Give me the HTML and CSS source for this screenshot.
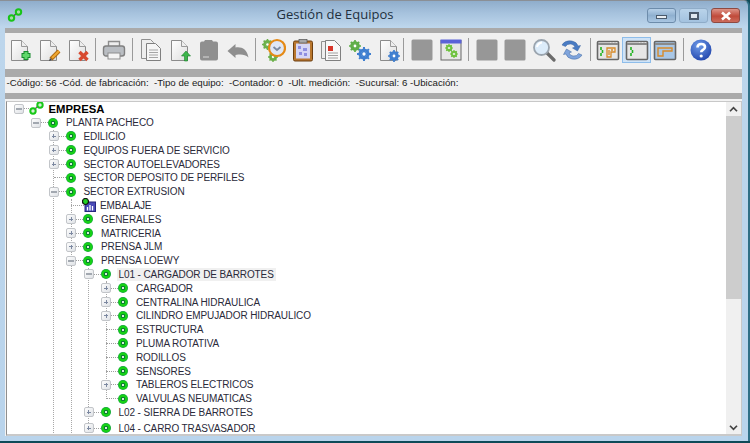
FILE: index.html
```html
<!DOCTYPE html>
<html lang="es">
<head>
<meta charset="utf-8">
<title>Gestión de Equipos</title>
<link rel="stylesheet" href="styles.css">
</head>
<body>
<svg class="defs" aria-hidden="true">
  <defs>
    <linearGradient id="page" x1="0" y1="0" x2="1" y2="1"><stop offset="0" stop-color="#fff"/><stop offset="1" stop-color="#dedede"/></linearGradient>
    <radialGradient id="helpg" cx=".4" cy=".3" r=".8"><stop offset="0" stop-color="#6f9be8"/><stop offset="1" stop-color="#1c3fa8"/></radialGradient>
    <symbol id="doc" viewBox="0 0 24 24"><path d="M3.5 2.5h10l6 6v14h-16z" fill="url(#page)" stroke="#8b8b8b"/><path d="M13.5 2.5v6h6" fill="#eee" stroke="#9a9a9a"/></symbol>
    <symbol id="gear" viewBox="0 0 12 12"><circle cx="6" cy="6" r="3.6" fill="none" stroke="currentColor" stroke-width="2.4"/><path d="M6 0v12M0 6h12M1.8 1.8l8.4 8.4M10.2 1.8l-8.4 8.4" stroke="currentColor" stroke-width="1.7"/><circle cx="6" cy="6" r="1.4" fill="#fff"/></symbol>
    <symbol id="win" viewBox="0 0 24 24"><rect x="1.5" y="3.5" width="21" height="18" rx="1" fill="#e6e6e6" stroke="#666" stroke-width="1.6"/><path d="M2 6h20" stroke="#8a8a8a" stroke-width="2"/><path d="M14 4.5h1M17 4.5h1M20 4.5h1" stroke="#ddd"/></symbol>
    <symbol id="grayblock" viewBox="0 0 24 24"><rect x="1.5" y="1.5" width="21" height="21" rx="1.5" fill="#979797"/></symbol>
  </defs>
</svg>
<div class="window">
  <header class="titlebar">
    <svg class="app-icon" viewBox="0 0 16 14"><path d="M5 9.500 11 4" stroke="#555" stroke-width="1.500"/><circle cx="4.500" cy="10" r="2.700" fill="#a9d8a9" stroke="#18c418" stroke-width="2"/><circle cx="11.500" cy="4" r="2.700" fill="#a9d8a9" stroke="#18c418" stroke-width="2"/></svg>
    <h1 class="title">Gestión de Equipos</h1>
    <div class="controls">
      <span class="ctl"><i class="ctl-min"></i></span>
      <span class="ctl ctl-plain"><i class="ctl-max"></i></span>
      <span class="ctl ctl-close">
        <svg viewBox="0 0 12 10"><path d="M2 1.500 10 8.500M10 1.500 2 8.500" stroke="#fff" stroke-width="2.600"/></svg>
      </span>
    </div>
  </header>

  <main class="client">
    <div class="bar"></div>
    <div class="toolbar">
      <div class="tb-group">
        <span class="btn"><svg viewBox="0 0 24 24"><use href="#doc"/><path d="M18 13v9M13.500 17.500h9" stroke="#178a2c" stroke-width="5"/><path d="M18 14v7M14.500 17.500h7" stroke="#5fd86a" stroke-width="3"/></svg></span>
        <span class="btn"><svg viewBox="0 0 24 24"><use href="#doc"/><path d="M22 13 14 21" stroke="#b06a10" stroke-width="4"/><path d="M22 13 15 20" stroke="#f0a830" stroke-width="2.200"/><path d="M13 20l-1 3 3-1z" fill="#444"/></svg></span>
        <span class="btn"><svg viewBox="0 0 24 24"><use href="#doc"/><path d="M13.500 14l8 8M21.500 14l-8 8" stroke="#d84a30" stroke-width="3.400"/></svg></span>
      </div>
      <span class="sep"></span>
      <div class="tb-group">
        <span class="btn"><svg viewBox="0 0 24 24"><path d="M6.500 8V3.500h11V8" fill="#eee" stroke="#8d8d8d" stroke-width="1.400"/><rect x="1.500" y="8" width="21" height="10" rx="2.500" fill="#b9bdc2" stroke="#808080" stroke-width="1.400"/><rect x="6" y="15" width="12" height="6" fill="#f4f4f4" stroke="#8d8d8d"/></svg></span>
      </div>
      <span class="sep"></span>
      <div class="tb-group">
        <span class="btn"><svg viewBox="0 0 24 24"><path d="M2.500 1.500h9l3 3v16h-12z" fill="#eee" stroke="#909090"/><path d="M7.500 5.500h9l5 5v12h-14z" fill="#f6f6f6" stroke="#808080"/><path d="M10 12h9M10 14.500h9M10 17h9M10 19.500h9" stroke="#a5a5a5" stroke-width="1.200"/></svg></span>
        <span class="btn"><svg viewBox="0 0 24 24"><use href="#doc"/><path d="M18 13l4.500 5h-3v5h-3v-5h-3z" fill="#3cb54a" stroke="#1c7f2c" stroke-width=".6"/></svg></span>
        <span class="btn"><svg viewBox="0 0 24 24"><path d="M3 5.500q0-2 2-2h2l1-1.500h7l1 1.500h3q2 0 2 2v15q0 2-2 2h-14q-2 0-2-2z" fill="#8f8f8f"/><path d="M6 19h6" stroke="#c5c5c5" stroke-width="1.400"/></svg></span>
        <span class="btn"><svg viewBox="0 0 24 24"><path d="M1.500 13l8-7v3.500c6-1 11.500 1.500 13 10-3.500-3-7-3.500-13-2.500v3z" fill="#8f8f8f"/></svg></span>
      </div>
      <span class="sep"></span>
      <div class="tb-group tb-fine">
        <span class="btn"><svg viewBox="0 0 24 24"><use href="#gear" x="0" y="1" width="11" height="11" color="#6bb04a"/><use href="#gear" x="6" y="14" width="10" height="10" color="#6bb04a"/><circle cx="15" cy="10" r="8" fill="#dfe7f5" stroke="#e58a16" stroke-width="2.200"/><path d="M11.500 9l3.500 3 3.500-3" fill="none" stroke="#7c8aa0" stroke-width="1.800"/></svg></span>
        <span class="btn"><svg viewBox="0 0 24 24"><rect x="2.500" y="3" width="19" height="20" rx="1.500" fill="#b9772e" stroke="#6d3f10"/><rect x="5" y="5.500" width="14" height="15" fill="#d6d6f5"/><path d="M7 8h3v3h-3zM12 10h4v3h-4zM8 14h3v3h-3zM13 15h3v3h-3z" fill="#8f8fe0"/><rect x="8" y="1.500" width="8" height="3.500" fill="#a8a8a8" stroke="#555" stroke-width=".7"/></svg></span>
        <span class="btn"><svg viewBox="0 0 24 24"><path d="M2.500 3.500h9l3 3v14h-12z" fill="#eee" stroke="#909090"/><path d="M6.500 2.500h9l6 6v14h-15z" fill="#f8f8f8" stroke="#808080"/><rect x="9" y="8" width="5" height="5" fill="#d8352a"/><path d="M9 15h10M9 17.500h10M9 20h10" stroke="#a0a0a0" stroke-width="1.100"/></svg></span>
        <span class="btn"><svg viewBox="0 0 24 24"><use href="#gear" x="1" y="2" width="12" height="12" color="#5fae48"/><use href="#gear" x="9" y="9" width="14" height="14" color="#3f7fd0"/></svg></span>
        <span class="btn"><svg viewBox="0 0 24 24"><use href="#doc"/><use href="#gear" x="11" y="12" width="12" height="12" color="#3f7fd0"/></svg></span>
      </div>
      <span class="sep sep-narrow"></span>
      <div class="tb-group tb-tight">
        <span class="btn"><svg viewBox="0 0 24 24"><use href="#grayblock"/></svg></span>
        <span class="btn"><svg viewBox="0 0 24 24"><rect x="2" y="2.500" width="20" height="19.500" fill="#e6e6e6" stroke="#666"/><rect x="1.500" y="1.500" width="21" height="4" fill="#5a62d8"/><use href="#gear" x="6" y="6" width="8" height="8" color="#6ec23e"/><use href="#gear" x="11" y="12" width="8" height="8" color="#6ec23e"/></svg></span>
      </div>
      <span class="sep"></span>
      <div class="tb-group tb-tight">
        <span class="btn"><svg viewBox="0 0 24 24"><use href="#grayblock"/></svg></span>
        <span class="btn"><svg viewBox="0 0 24 24"><use href="#grayblock"/></svg></span>
        <span class="btn"><svg viewBox="0 0 24 24"><path d="M14.500 14.500 22 22" stroke="#6b6b6b" stroke-width="3.200" stroke-linecap="round"/><circle cx="9.500" cy="9.500" r="7.500" fill="#dcecfa" stroke="#9aa4ae" stroke-width="1.800"/><path d="M5 9q1-4 5-4.500" stroke="#fff" stroke-width="2" fill="none"/></svg></span>
        <span class="btn"><svg viewBox="0 0 24 24"><path d="M2 7q3-5 10-4 5 1 6 5l2.500-.5-3 5.500-5-3 2.500-1q-1-2.500-4-3-4-.5-5.500 2.500z" fill="#4a7cc4" stroke="#3a649f" stroke-width=".5"/><path d="M22 17q-3 5-10 4-5-1-6-5l-2.500.5 3-5.500 5 3-2.500 1q1 2.500 4 3 4 .5 5.500-2.500z" fill="#7fa4dc" stroke="#3a649f" stroke-width=".5"/></svg></span>
      </div>
      <span class="sep"></span>
      <div class="tb-group tb-tight">
        <span class="btn"><svg viewBox="0 0 24 24"><use href="#win"/><path d="M5 9v3M6.500 12v3M5 15v3" stroke="#22b522" stroke-width="1.600"/><path d="M11 10h8v4h-4v5h-4zM13 12v5M15 12h2" fill="none" stroke="#d88a28" stroke-width="1.300"/></svg></span>
        <span class="btn btn-on"><svg viewBox="0 0 24 24"><use href="#win"/><path d="M6 9v3M7.500 12v3M6 15v3" stroke="#22b522" stroke-width="1.600"/></svg></span>
        <span class="btn"><svg viewBox="0 0 24 24"><rect x="1.500" y="3.500" width="21" height="18" rx="1" fill="#a9c7e6" stroke="#666" stroke-width="1.600"/><path d="M2 6h20" stroke="#8a8a8a" stroke-width="2"/><path d="M5 10h14v3h-9v5h-5z" fill="none" stroke="#d88a28" stroke-width="1.400"/></svg></span>
      </div>
      <span class="sep"></span>
      <span class="btn"><svg viewBox="0 0 24 24"><circle cx="12" cy="12" r="10.500" fill="url(#helpg)"/><path d="M8.500 9.500q0-3.500 3.700-3.500 3.800 0 3.800 3 0 2-2.200 3-1.600.8-1.600 2.200" fill="none" stroke="#fff" stroke-width="2.600"/><circle cx="12.200" cy="18" r="1.600" fill="#fff"/></svg></span>
    </div>
    <div class="bar bar-mid"></div>
    <div class="info">-Código: 56 -Cód. de fabricación:  -Tipo de equipo:  -Contador: 0  -Ult. medición:  -Sucursal: 6 -Ubicación:</div>
    <div class="bar bar-low"></div>

    <section class="panel">
      <div class="tree">
        <div class="row row-root"><span class="tg minus"></span><span class="dash dash-root"></span><svg class="root-icon" viewBox="0 0 15 14"><path d="M5 9 10 4" stroke="#666" stroke-width="1.500"/><circle cx="4" cy="10" r="2.700" fill="#d6f0d6" stroke="#16c816" stroke-width="2"/><circle cx="11" cy="4" r="2.700" fill="#d6f0d6" stroke="#16c816" stroke-width="2"/></svg><b class="label">EMPRESA</b></div>
        <div class="group plain">
          <div class="row"><span class="tg minus"></span><span class="dash"></span><i class="node"></i><span class="label">PLANTA PACHECO</span></div>
          <div class="group">
            <div class="row"><span class="tg plus"></span><span class="dash"></span><i class="node"></i><span class="label">EDILICIO</span></div>
            <div class="row"><span class="tg plus"></span><span class="dash"></span><i class="node"></i><span class="label">EQUIPOS FUERA DE SERVICIO</span></div>
            <div class="row"><span class="tg plus"></span><span class="dash"></span><i class="node"></i><span class="label">SECTOR AUTOELEVADORES</span></div>
            <div class="row"><span class="dash dash-long"></span><i class="node"></i><span class="label">SECTOR DEPOSITO DE PERFILES</span></div>
            <div class="row"><span class="tg minus"></span><span class="dash"></span><i class="node"></i><span class="label">SECTOR EXTRUSION</span></div>
            <div class="group">
              <div class="row"><span class="dash dash-chart"></span><svg class="chart-icon" viewBox="0 0 14 14"><rect x="3" y="4" width="10.500" height="9.500" fill="#4a4ab8" stroke="#26267e"/><path d="M5.500 12.500V9M8 12.500V7M10.500 12.500V8" stroke="#fff" stroke-width="1.300"/><circle cx="3.500" cy="3.500" r="3" fill="#22d022" stroke="#111" stroke-width="1.200"/></svg><span class="label">EMBALAJE</span></div>
              <div class="row"><span class="tg plus"></span><span class="dash"></span><i class="node"></i><span class="label">GENERALES</span></div>
              <div class="row"><span class="tg plus"></span><span class="dash"></span><i class="node"></i><span class="label">MATRICERIA</span></div>
              <div class="row"><span class="tg plus"></span><span class="dash"></span><i class="node"></i><span class="label">PRENSA JLM</span></div>
              <div class="row"><span class="tg minus"></span><span class="dash"></span><i class="node"></i><span class="label">PRENSA LOEWY</span></div>
              <div class="group">
                <div class="row"><span class="tg minus"></span><span class="dash"></span><i class="node"></i><span class="label selected">L01 - CARGADOR DE BARROTES</span></div>
                <div class="group ends">
                  <div class="row"><span class="tg plus"></span><span class="dash"></span><i class="node"></i><span class="label">CARGADOR</span></div>
                  <div class="row"><span class="tg plus"></span><span class="dash"></span><i class="node"></i><span class="label">CENTRALINA HIDRAULICA</span></div>
                  <div class="row"><span class="tg plus"></span><span class="dash"></span><i class="node"></i><span class="label">CILINDRO EMPUJADOR HIDRAULICO</span></div>
                  <div class="row"><span class="dash dash-long"></span><i class="node"></i><span class="label">ESTRUCTURA</span></div>
                  <div class="row"><span class="dash dash-long"></span><i class="node"></i><span class="label">PLUMA ROTATIVA</span></div>
                  <div class="row"><span class="dash dash-long"></span><i class="node"></i><span class="label">RODILLOS</span></div>
                  <div class="row"><span class="dash dash-long"></span><i class="node"></i><span class="label">SENSORES</span></div>
                  <div class="row"><span class="tg plus"></span><span class="dash"></span><i class="node"></i><span class="label">TABLEROS ELECTRICOS</span></div>
                  <div class="row"><span class="dash dash-long"></span><i class="node"></i><span class="label">VALVULAS NEUMATICAS</span></div>
                </div>
                <div class="row"><span class="tg plus"></span><span class="dash"></span><i class="node"></i><span class="label">L02 - SIERRA DE BARROTES</span></div>
                <div class="row row-gap"><span class="tg plus"></span><span class="dash"></span><i class="node"></i><span class="label">L04 - CARRO TRASVASADOR</span></div>
              </div>
            </div>
          </div>
        </div>
      </div>
      <div class="scrollbar">
        <span class="arrow"><svg viewBox="0 0 10 8"><path d="M1 6 5 2l4 4" fill="none" stroke="#444" stroke-width="2"/></svg></span>
        <div class="thumb"></div>
        <div class="track"></div>
        <span class="arrow"><svg viewBox="0 0 10 8"><path d="M1 2l4 4 4-4" fill="none" stroke="#444" stroke-width="2"/></svg></span>
      </div>
    </section>
  </main>
</div>
</body>
</html>
```
FILE: styles.css
```css
* { box-sizing: border-box; }
html, body { margin: 0; padding: 0; }
body { width: 750px; height: 443px; overflow: hidden; background: #0f4a58; font-family: "Liberation Sans", Arial, sans-serif; }
.defs { display: block; width: 0; height: 0; }

.window {
  width: 750px; height: 441px;
  display: flex; flex-direction: column;
  background: linear-gradient(180deg, #8fadcb 0, #a6c2dd 12px, #bdd6ec 26px, #b9d4ec 100%);
  border-top: 1px solid #8a8f96;
  border-right: 2px solid #2f6f86;
  border-radius: 0 6px 0 0;
}

.titlebar { height: 25px; display: flex; align-items: center; padding-left: 7px; flex: none; }
.app-icon { width: 16px; height: 14px; flex: none; margin-top: 3px; }
.title { flex: 1; margin: 0; text-align: center; font: 400 13px/20px "Open Sans", sans-serif; color: #22303e; }
.controls { display: flex; gap: 3px; margin: 4px 8px 0 0; }
.ctl { width: 29px; height: 15px; display: flex; align-items: center; justify-content: center; border: 1px solid #6d8cab; border-radius: 3px; background: linear-gradient(180deg, #b7d0e8, #8fb0d0 50%, #a9c6e2); }
.ctl-plain { border-color: #8facc8; background: linear-gradient(180deg, #b9d3ea, #a3c2df); }
.ctl-close { border-color: #8e4a42; background: linear-gradient(180deg, #dd9488, #c04a3a 55%, #cc6c5c); }
.ctl-close svg { width: 12px; height: 10px; }
.ctl-min { width: 11px; height: 4px; border: 1px solid #4a5a6c; background: #e8edf2; margin-top: 3px; }
.ctl-max { width: 10px; height: 8px; border: 2px solid #4a5a6c; background: #dfe8f0; }

.client { flex: 1; margin: 0 6px 0 5px; display: flex; flex-direction: column; min-height: 0; padding-top: 2px; padding-bottom: 5px; background: #f3f3f3; background-clip: content-box; }
.bar { height: 5px; background: #aaa; flex: none; }
.bar-mid { height: 8px; }
.bar-low { height: 6px; margin-bottom: 2px; }

.toolbar { height: 36px; flex: none; display: flex; align-items: center; padding-bottom: 3px; background: #f0f0f0; }
.tb-group { display: flex; flex: none; }
.btn { width: 29px; height: 26px; flex: none; display: flex; align-items: center; justify-content: center; }
.btn svg { width: 24px; height: 24px; display: block; }
.tb-fine .btn { width: 28.750px; }
.tb-tight .btn { width: 28.500px; }
.btn-on { background: #cfe3f7; box-shadow: inset 0 0 0 1px #8ebdea; }
.sep { width: 1px; height: 23px; margin: 0 3.250px; background: #9a9a9a; flex: none; }
.sep-narrow { margin: 0 4px 0 -.5px; }

.info { height: 16px; flex: none; font-size: 9.700px; line-height: 12px; color: #1a1a1a; background: #f0f0f0; white-space: pre; padding-left: 1.500px; }

.panel { flex: 1; min-height: 0; display: flex; margin-left: 1px; background: #fff; border-left: 1px solid #8f8f8f; border-right: 1px solid #c8c8c8; border-top: 1px solid #c8c8c8; border-bottom: 2px solid #c9c9c9; }
.tree { flex: 1; min-width: 0; overflow: hidden; padding-left: 12px; }

.row { height: 13.800px; display: flex; align-items: center; font-size: 10px; letter-spacing: -.1px; color: #2a2a3a; white-space: nowrap; }
.group { display: flow-root; margin-left: 16.500px; border-left: 1px dotted #a8a8a8; }
.group > .row { margin-left: -5.500px; }
.plain { border-left-color: transparent; }
.ends { margin-bottom: 7px; }
.ends > .row:last-child { margin-bottom: -7px; }
.row-gap { margin-top: 2px; }

.tg { width: 10px; height: 10px; flex: none; position: relative; border: 1px solid #c2c5c9; border-radius: 2px; background: linear-gradient(135deg, #fdfdfd, #dfe2e6); }
.tg::before { content: ""; position: absolute; left: 1px; right: 1px; top: 3px; height: 2px; background: #a2a8b0; }
.plus::before { background: #7c88a0; left: 2px; right: 2px; top: 3.500px; height: 1px; }
.plus::after { content: ""; position: absolute; top: 2px; bottom: 2px; left: 3.500px; width: 1px; background: #7c88a0; }
.dash { width: 7px; height: 0; flex: none; border-top: 1px dotted #a0a0a0; }
.dash-long { width: 12px; margin-left: 5px; }
.dash-chart { width: 12.500px; margin-left: 5px; }
.dash-root { width: 5px; }
.node { width: 10px; height: 10px; flex: none; border-radius: 50%; background: radial-gradient(circle, #d8f0d8 0 1px, #0b7a34 1.300px 2px, #16d016 2.400px 4.200px, #12a53a 4.600px); }
.label { margin: 1px 0 0 8px; padding-right: 1px; line-height: 10px; }
.row-root { margin-left: -5.500px; font-size: 11.300px; letter-spacing: 0; color: #000; }
.root-icon { width: 15px; height: 14px; flex: none; margin-top: -2px; }
.row-root .label { margin-left: 5px; margin-top: 0; }
.chart-icon { width: 14px; height: 14px; flex: none; margin-left: -2px; margin-right: -3.500px; }
.selected { background: #f0f0f0; margin: 0 0 0 6px; padding: 1px 2px 0; line-height: 12.800px; }

.scrollbar { width: 15px; flex: none; display: flex; flex-direction: column; background: #f0f0f0; }
.arrow { height: 14px; flex: none; display: flex; align-items: center; justify-content: center; }
.arrow svg { width: 9px; height: 7px; }
.thumb { height: 183px; flex: none; background: #cdcdcd; }
.track { flex: 1; }
```
